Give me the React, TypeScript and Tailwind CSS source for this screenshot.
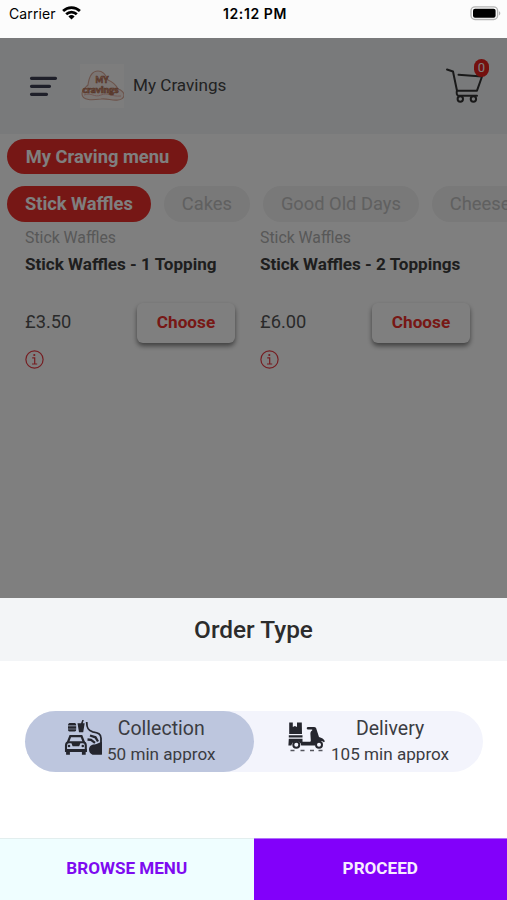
import React from 'react';
import clsx from 'clsx';

interface Product {
  category: string;
  name: string;
  price: string;
}

interface OrderTypeProps {
  title: string;
  time: string;
  icon: React.ReactNode;
  active?: boolean;
  className?: string;
}

const categories = ['Stick Waffles', 'Cakes', 'Good Old Days', 'Cheese'];

const products: Product[] = [
  { category: 'Stick Waffles', name: 'Stick Waffles - 1 Topping', price: '£3.50' },
  { category: 'Stick Waffles', name: 'Stick Waffles - 2 Toppings', price: '£6.00' },
];

const WifiIcon = () => (
  <svg width="19" height="15" viewBox="0 0 19 15" fill="none" stroke="#000" strokeWidth="2.7">
    <path d="M1.1 5a12 12 0 0 1 16.8 0" />
    <path d="M4.2 8.2a7.6 7.6 0 0 1 10.6 0" />
    <path d="M9.5 13.6 6.4 10.5a4.5 4.5 0 0 1 6.2 0Z" fill="#000" stroke="none" />
  </svg>
);

const BatteryIcon = () => (
  <svg width="31" height="15" viewBox="0 0 31 15">
    <rect x="1" y="0.9" width="26.6" height="12.6" rx="4" fill="#fff" stroke="#b4b4b4" strokeWidth="1.4" />
    <rect x="3" y="2.7" width="22.6" height="9" rx="2" fill="#000" />
    <path d="M29 5.2c1.8.6 1.8 3.6 0 4.2z" fill="#b4b4b4" />
  </svg>
);

const MenuIcon = () => (
  <svg width="29" height="21" viewBox="0 0 29 21" stroke="#3c3e52" strokeWidth="3.2" strokeLinecap="round">
    <path d="M2.5 2.3h24M2.5 10.3h18M2.5 18.3h15" />
  </svg>
);

const CartIcon = () => (
  <svg width="40" height="38" viewBox="0 0 40 38" fill="none" stroke="#333" strokeWidth="2" strokeLinecap="round" strokeLinejoin="round">
    <path d="M2 2.5 8 4.5 12 23.7h20L37 9.5 13.5 7.8" />
    <path d="M12 23.7c-.8 2.3-.2 5 1.5 5H32" />
    <circle cx="15.3" cy="32" r="2.7" />
    <circle cx="28.4" cy="32" r="2.7" />
  </svg>
);

const ShopLogo = () => (
  <div className="flex size-11 items-center justify-center bg-[#fbfbfb]">
    <svg width="44" height="44" viewBox="0 0 44 44" fill="none">
      <path
        d="M2 30c0-4 3-6 6-9 1-8 4-14 10-14 5 0 8 4 10 9 5 2 8 5 10 9 4 1 6 4 6 6 0 3-3 5-6 5-6 1-11-2-17-1-8 1-19 2-19-5Z"
        fill="#f6ebe6"
        stroke="#d9a796"
        strokeWidth="1.1"
      />
      <path d="M4 31c8-3 10 3 17 0s10 2 20 1" stroke="#e3aaa4" strokeWidth="0.9" />
      <g fill="#e0a284" stroke="#a9654c" strokeWidth="0.6" fontFamily="Lato" fontWeight="900" textAnchor="middle">
        <text x="22" y="18.5" fontSize="8.5" textLength="13" lengthAdjust="spacingAndGlyphs">
          MY
        </text>
        <text x="20.5" y="28.5" fontSize="8.5" textLength="36" lengthAdjust="spacingAndGlyphs">
          cravings
        </text>
      </g>
    </svg>
  </div>
);

const InfoIcon = () => (
  <svg width="19" height="19" viewBox="0 0 19 19" fill="none" stroke="#ea3a42" strokeWidth="1.2">
    <circle cx="9.5" cy="9.5" r="8.6" />
    <path d="M7.2 7.8h2.5v6M7 14h5.2" />
    <circle cx="9.3" cy="5" r="1.1" fill="#ea3a42" stroke="none" />
  </svg>
);

const CollectionIcon = () => (
  <svg width="39" height="36" viewBox="0 0 39 36" fill="none" stroke="#25262e" strokeWidth="2">
    {/* burger and drink */}
    <path
      d="M4 5.500c0-2 1-2.500 2.500-2.500H10c1.500 0 2.200.5 2.200 2.500zM4 6.200h8.200v2.500H4zM4 9.300h8.200c0 1.500-.5 2.200-1.500 2.200H5.500C4.500 11.500 4 10.800 4 9.300Z"
      fill="#25262e"
      stroke="none"
    />
    <path d="M13.500 3.200h7.200l-1.500 9h-4.200zM17 3.200 18.300 0h1.500l-1 3.200z" fill="#25262e" stroke="none" />
    {/* car */}
    <path d="m3.800 22.500 2.500-6.300h11.200l2.500 6.300" strokeWidth="2.2" />
    <path d="M2 31v-5.500c0-2 1.200-3.200 3-3.200h13.800c1.800 0 3 1.200 3 3.200V31Z" strokeWidth="2.1" />
    <path d="M7 22h9.800l-1.600 4.300H8.600zM1 29h21.800v3H1z" fill="#25262e" stroke="none" />
    <path d="M4 32v2.800M19.800 32v2.800" strokeWidth="3.8" />
    <circle cx="5" cy="26" r="1.3" fill="#25262e" stroke="none" />
    <circle cx="18.8" cy="26" r="1.3" fill="#25262e" stroke="none" />
    {/* window and arm */}
    <path d="M22.7 2c0 6 1.3 8.800 6 9.800 5.500 1 8.300 2 8.300 6.500V34" strokeWidth="1.8" />
    <path d="m23.500 19.500 3.500.3 4 3M26 15.500l5.500 1.800 2.500 4.200" strokeWidth="2.3" />
    <path
      d="M37.900 34.800H28.500c-2.200-1-3.500-2.800-3.500-5.200 0-3.300 2.500-5.100 5.500-5.100 3 0 4.500-2.500 7.400-2.500z"
      fill="#25262e"
      stroke="none"
    />
  </svg>
);

const DeliveryIcon = () => (
  <svg width="37" height="31" viewBox="0 0 37 31" fill="#25262e">
    {/* boxes */}
    <path d="M1.2.5h3.600V5l2.100-1L9 5V.5h4.800L14 12H1.200zM.8 13.200h13.700v2.200H.8z" />
    {/* scooter */}
    <path d="M.8 16.700h13.700v3.100h7.300c.7 0 1.100-.7 1-1.500l-.4-6.300c-.1-1.600.6-2.900 1.800-3.400V7.500h-4.500c-1.300 0-1.300-2.500 0-2.500h6.500c1.200 0 1.900.7 2.200 1.900l2.600 8c2.800.8 4.900 2 5.900 4.400l-1 1c-2-2-6.500-2-8.300 2.200l-.6 1H13.200c-.3-5.600-9-5.600-9.800 0H.4z" />
    <g fill="#f3f4fc" stroke="#25262e" strokeWidth="2">
      <circle cx="8.3" cy="22.8" r="3" />
      <circle cx="31" cy="22.8" r="3" />
    </g>
    <path d="M2.500 28.500h4M12.500 28.500h4M22 28.500h4M30.500 28.500h4" stroke="#55565e" strokeWidth="1.3" />
  </svg>
);

const ProductCard: React.FC<Product> = ({ category, name, price }) => (
  <div className="w-[235px]">
    <div className="text-[15.8px] leading-6 text-[#b0b0b0]">{category}</div>
    <div className="text-[17.1px] font-bold leading-7 whitespace-nowrap text-[#3c3c3c]">{name}</div>
    <div className="mt-[25px] flex h-10 w-[210px] items-center justify-between">
      <span className="pb-0.5 text-[18.3px] text-[#555]">{price}</span>
      <button className="h-10 w-[98px] rounded-md bg-white text-[17.2px] font-bold text-[#ee302b] shadow-[0_3px_5px_rgba(0,0,0,0.5)]">
        Choose
      </button>
    </div>
    <div className="mt-[7px]">
      <InfoIcon />
    </div>
  </div>
);

const OrderType: React.FC<OrderTypeProps> = ({ title, time, icon, active, className }) => (
  <button
    className={clsx(
      'flex h-[61px] w-[229px] rounded-full text-[#3b3c42]',
      active && 'bg-[#bdc6de]',
      className,
    )}
  >
    {icon}
    <span className="flex flex-col items-center pt-1">
      <span className="text-[19.5px] leading-7">{title}</span>
      <span className="text-[17.1px] leading-[22px] whitespace-nowrap">{time}</span>
    </span>
  </button>
);

export default function App() {
  return (
    <div className="flex h-[900px] w-[507px] flex-col overflow-hidden bg-white font-['Roboto',sans-serif]">
      <div className="grid h-[38px] shrink-0 grid-cols-3 items-start bg-[#fcfcfc] pr-1.5 pl-[9px] font-['Inter',sans-serif] text-[14px] text-black">
        <div className="flex items-center gap-1.5 pt-[3px]">
          <span className="tracking-[0.1px]">Carrier</span>
          <WifiIcon />
        </div>
        <div className="pt-[3px] text-center font-semibold tracking-[0.6px]">12:12 PM</div>
        <div className="flex justify-end pt-1.5">
          <BatteryIcon />
        </div>
      </div>

      <div className="relative h-[560px] shrink-0 overflow-hidden">
        <header className="flex h-24 items-center bg-[#f3f5f7] pr-[22px] pl-[29px]">
          <MenuIcon />
          <div className="ml-[22px]">
            <ShopLogo />
          </div>
          <span className="ml-[9px] text-[17.1px] text-[#444]">My Cravings</span>
          <div className="relative ml-auto">
            <CartIcon />
            <span className="absolute -top-2 right-[-4px] flex h-[18px] w-[15px] items-center justify-center rounded-full bg-[#e8201c] text-[13px] text-white">
              0
            </span>
          </div>
        </header>

        <div className="pt-[5px] pl-[7px]">
          <button className="block h-[35px] w-[181px] rounded-full bg-[#ec2f2a] text-[18.3px] font-bold text-white">
            My Craving menu
          </button>
          <div className="mt-3 flex gap-[13px]">
            {categories.map((category, i) => (
              <button
                key={category}
                className={clsx(
                  'h-9 shrink-0 rounded-full px-[18px] pb-px text-[18.3px]',
                  i === 0 ? 'bg-[#ec2f2a] font-bold text-white' : 'bg-[#f2f2f2] text-[#c0c0c0]',
                )}
              >
                {category}
              </button>
            ))}
          </div>
        </div>

        <div className="mt-[4px] flex pl-[25px]">
          {products.map((product) => (
            <ProductCard key={product.name} {...product} />
          ))}
        </div>

        <div className="absolute inset-0 bg-black/50" />
      </div>

      <div className="flex h-[63px] shrink-0 items-center justify-center bg-[#f3f5f7] pt-0.5 text-[24.4px] font-medium text-[#2c2c2c]">
        Order Type
      </div>
      <div className="h-[177px] shrink-0 px-[25px] pt-[50px]">
        <div className="flex w-[458px] rounded-full bg-[#f3f4fc]">
          <OrderType
            active
            className="gap-[4px] pl-[39px]"
            title="Collection"
            time="50 min approx"
            icon={
              <div className="pt-[9px]">
                <CollectionIcon />
              </div>
            }
          />
          <OrderType
            className="gap-1.5 pl-[34px]"
            title="Delivery"
            time="105 min approx"
            icon={
              <div className="pt-[11px]">
                <DeliveryIcon />
              </div>
            }
          />
        </div>
      </div>
      <div className="grid h-[62px] grid-cols-2 text-[17.1px] font-bold">
        <button className="border-t border-[#e2eeee] bg-[#effeff] pb-0.5 text-[#7e0bf0]">BROWSE MENU</button>
        <button className="border-t border-[#b070fa] bg-[#8200fa] pb-0.5 text-[#f7edff]">PROCEED</button>
      </div>
    </div>
  );
}
